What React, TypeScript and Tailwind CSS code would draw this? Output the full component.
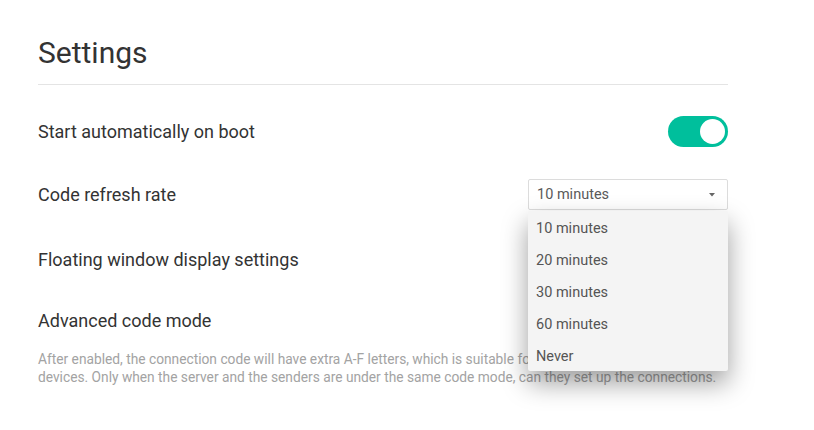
import { useState } from 'react';

const options = ['10 minutes', '20 minutes', '30 minutes', '60 minutes', 'Never'];

function Toggle({ on }: { on: boolean }) {
  return (
    <div
      className={
        'flex h-[31px] w-[60px] items-center rounded-full px-[3px] ' +
        (on ? 'justify-end bg-[#00bf9c]' : 'justify-start bg-[#cfcfcf]')
      }
    >
      <div className="h-[25px] w-[25px] rounded-full bg-white" />
    </div>
  );
}

function Select({ value, open }: { value: string; open: boolean }) {
  return (
    <div className="relative w-[200px]">
      <div className="flex h-[31px] items-center justify-between rounded-[2px] border border-[#dcdcdc] bg-white pl-[8px] pr-[12px] text-[14.5px] text-[#5a5a5a]">
        <span>{value}</span>
        <svg width="6" height="4" viewBox="0 0 6 4" className="fill-[#666]">
          <path d="M0 0h6L3 3.5z" />
        </svg>
      </div>

      {/* Dropdown */}
      {open && (
        <div className="absolute left-0 top-[32px] z-10 w-[200px] rounded-[2px] bg-[#f4f4f4] shadow-[0_12px_26px_rgba(0,0,0,0.38)]">
          {options.map((opt) => (
            <div
              key={opt}
              className="flex h-[32px] items-center px-[8px] pt-[3px] text-[14.5px] text-[#555]"
            >
              {opt}
            </div>
          ))}
        </div>
      )}
    </div>
  );
}

export default function App() {
  const [autoStart] = useState(true);

  return (
    <div
      className="h-[430px] w-[814px] bg-white"
      style={{ fontFamily: 'Roboto, "Noto Sans", sans-serif' }}
    >
      <div className="ml-[38px] w-[690px] pt-[34px]">
        {/* Header */}
        <h1 className="h-[51px] border-b border-[#e4e4e4] text-[30px] leading-[38px] text-[#333]">
          Settings
        </h1>

        <div className="mt-[14px] flex h-[64px] items-center justify-between text-[18px] text-[#333]">
          <span>Start automatically on boot</span>
          <Toggle on={autoStart} />
        </div>

        <div className="flex h-[63px] items-center justify-between text-[18px] text-[#333]">
          <span>Code refresh rate</span>
          <Select value="10 minutes" open />
        </div>

        <div className="flex h-[66px] items-center text-[18px] text-[#333]">
          <span>Floating window display settings</span>
        </div>

        <div className="pt-[17px]">
          <div className="text-[18px] leading-[24px] text-[#333]">Advanced code mode</div>
          <p className="mt-[17px] w-[690px] text-[13.75px] leading-[18px] text-[#a3a3a3]">
            After enabled, the connection code will have extra A-F letters, which is suitable for
            scenarios with a lot of
            <br />
            devices. Only when the server and the senders are under the same code mode, can they
            set up the connections.
          </p>
        </div>
      </div>
    </div>
  );
}
